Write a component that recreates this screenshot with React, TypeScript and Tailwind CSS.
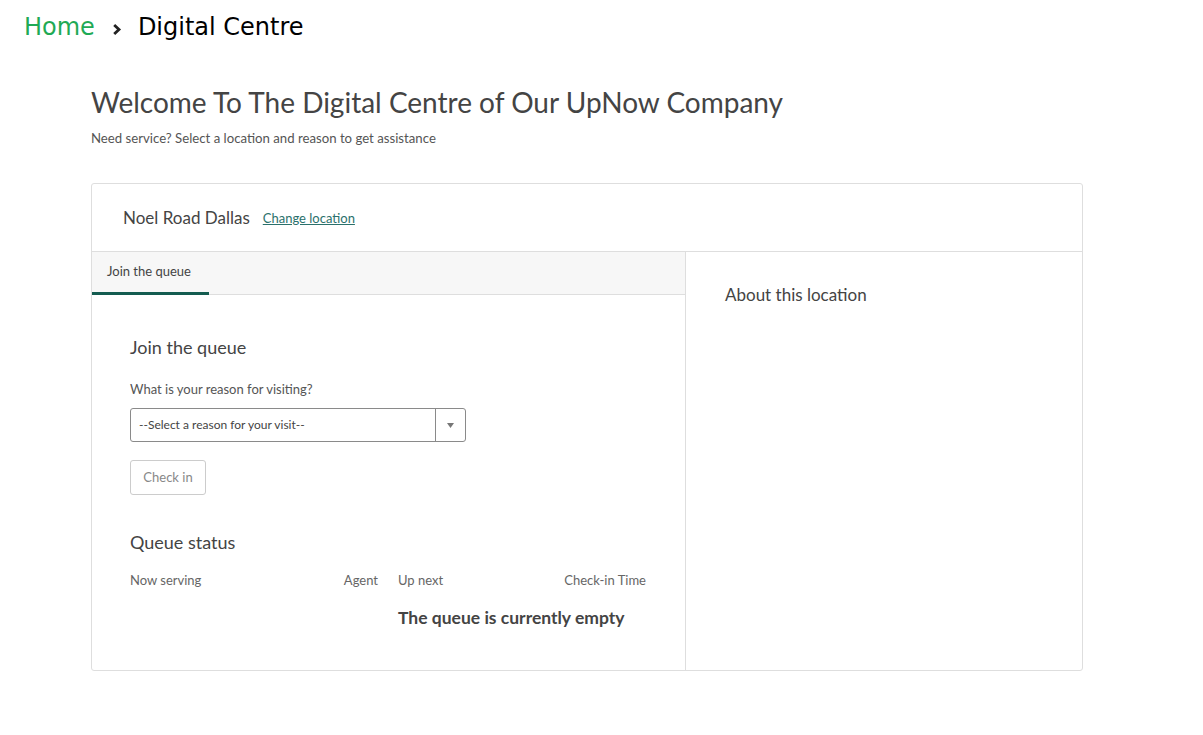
import React from "react";

const body = { fontFamily: "Lato, 'Noto Sans', sans-serif" };

export default function App() {
  return (
    <div className="min-h-[735px] bg-white" style={body}>
      <nav className="flex items-center pl-6 pt-[2px] h-[52px]" style={{ fontFamily: "'DejaVu Sans', Verdana, sans-serif" }}>
        <span className="text-[24px] text-[#1faa55]">Home</span>
        <svg className="ml-[17px] mr-[16px] mt-[4px]" width="10" height="13" viewBox="0 0 10 13">
          <path d="M2.2 2 L7 6.5 L2.2 11" fill="none" stroke="#222" strokeWidth="2.8" />
        </svg>
        <span className="text-[24px] text-black">Digital Centre</span>
      </nav>
      <div className="pl-[91px] w-[1083px]">
        <h1 className="mt-[32px] text-[28px] leading-[36px] text-[#444]">Welcome To The Digital Centre of Our UpNow Company</h1>
        <p className="mt-[9px] text-[13.2px] text-[#555]">Need service? Select a location and reason to get assistance</p>
        <div className="mt-[34px] border border-[#dedede] rounded-[3px]">
          <div className="h-[68px] flex items-center pl-[31px] border-b border-[#dedede]">
            <span className="text-[17px] text-[#444]">Noel Road Dallas</span>
            <a className="ml-[13px] mt-[2px] text-[13px] text-[#2b716c] underline">Change location</a>
          </div>
          <div className="flex">
            <div className="w-[594px] border-r border-[#dedede]">
              <div className="h-[43px] bg-[#f7f7f7] border-b border-[#dedede] flex">
                <div className="w-[117px] border-b-[3px] border-[#145c50] mb-[-1px] flex items-center pl-[15px] text-[13px] text-[#444]">Join the queue</div>
              </div>
              <div className="pl-[38px] pr-[38px] pt-[39px] pb-[39px]">
                <h2 className="text-[18px] text-[#444]">Join the queue</h2>
                <p className="mt-[19px] text-[13px] text-[#555]">What is your reason for visiting?</p>
                <div className="mt-[9px] w-[336px] h-[34px] border border-[#8a8a8a] rounded-[3px] flex">
                  <div className="flex-1 flex items-center pl-[8px] text-[12px] text-[#444]">--Select a reason for your visit--</div>
                  <div className="w-[30px] border-l border-[#8a8a8a] flex items-center justify-center">
                    <svg width="7" height="5" viewBox="0 0 7 5"><path d="M0 0 L7 0 L3.5 5 Z" fill="#777" /></svg>
                  </div>
                </div>
                <button className="mt-[18px] w-[76px] h-[35px] border border-[#cccccc] rounded-[3px] text-[13px] text-[#888]">Check in</button>
                <h2 className="mt-[34px] text-[18px] text-[#444]">Queue status</h2>
                <div className="mt-[15px] flex text-[13px] text-[#666]">
                  <div className="w-[248px] flex justify-between">
                    <span>Now serving</span>
                    <span>Agent</span>
                  </div>
                  <div className="ml-[20px] w-[248px] flex justify-between">
                    <span>Up next</span>
                    <span>Check-in Time</span>
                  </div>
                </div>
                <div className="mt-[14px] ml-[268px] text-[17.5px] font-bold text-[#444]">The queue is currently empty</div>
              </div>
            </div>
            <div className="flex-1 pl-[39px] pt-[30px]">
              <h2 className="text-[17px] text-[#444]">About this location</h2>
            </div>
          </div>
        </div>
      </div>
    </div>
  );
}
